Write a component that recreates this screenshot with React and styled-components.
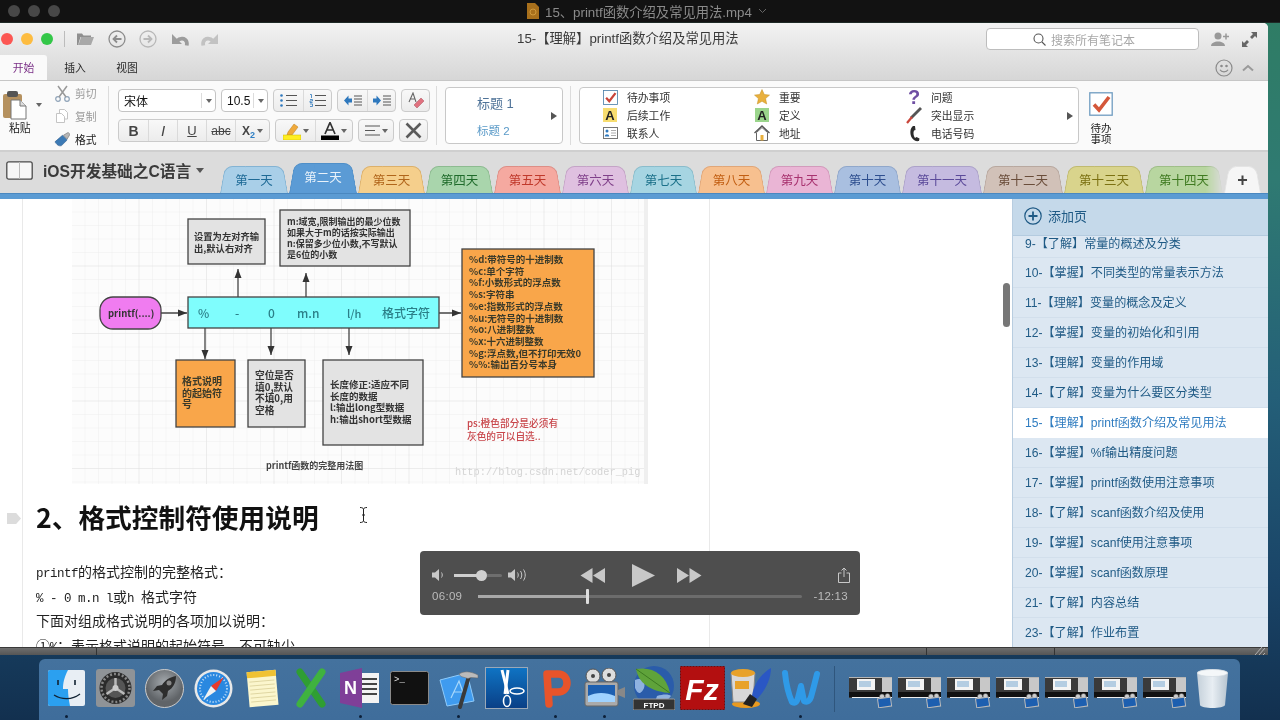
import React from 'react';
import styled, { createGlobalStyle, css } from 'styled-components';

const Global = createGlobalStyle`
  html, body { margin: 0; padding: 0; background: #17304a; }
  * { box-sizing: border-box; }
  body { font-family: "Liberation Sans", "Noto Sans CJK SC", sans-serif; }
`;

const Stage = styled.div`
  position: relative; width: 1280px; height: 720px; overflow: hidden;
  display: flex; flex-direction: column;
  background: linear-gradient(180deg, #2f7d63 0%, #2f7a72 25%, #245f78 55%, #1a4568 80%, #12304f 100%);
  filter: blur(0.4px);
`;

/* ---------- movie player title bar ---------- */
const TopBar = styled.div`
  height: 23px; flex: none; background: #121212; display: flex; align-items: center;
  border-bottom: 1px solid #1e2a26; padding-left: 8px;
`;
const Dim = styled.span`width: 12px; height: 12px; border-radius: 50%; background: #474747; margin-right: 8px;`;
const MovieTitle = styled.div`
  margin-left: 459px; display: flex; align-items: center; gap: 6px;
  color: #8b8b8b; font-size: 13.3px; white-space: nowrap;
`;

/* ---------- window ---------- */
const Window = styled.div`
  width: 1268px; height: 632px; flex: none; display: flex; flex-direction: column;
  border-top-right-radius: 5px; overflow: hidden; background: #fff;
`;
const Chrome = styled.div`
  height: 57px; flex: none; display: flex; flex-direction: column;
  background: linear-gradient(180deg, #f3f3f3 0%, #e4e4e4 50%, #d6d6d6 100%);
`;
const ChromeTop = styled.div`height: 32px; display: flex; align-items: center; position: relative;`;
const Light = styled.span`
  width: 12px; height: 12px; border-radius: 50%; background: ${p => p.$c}; margin-left: ${p => p.$ml}px; flex: none;
`;
const ToolSep = styled.span`width: 1px; height: 16px; background: #bcbcbc; margin-left: 11px; flex: none;`;
const ToolIcon = styled.span`display: flex; flex: none; margin-left: ${p => p.$ml}px;`;
const NoteTitle = styled.div`
  position: absolute; left: 517px; top: 8px; font-size: 13.3px; line-height: 16px; color: #3a3a3a; white-space: nowrap;
`;
const Search = styled.div`
  margin-left: 767px; width: 213px; height: 22px; flex: none; border: 1px solid #bdbdbd; border-radius: 4px; background: #fff;
  display: flex; align-items: center; padding-left: 46px; gap: 5px; color: #a8a8a8; font-size: 12px;
`;
const ChromeTabs = styled.div`height: 25px; display: flex; align-items: flex-end; position: relative;`;
const RibbonTab = styled.div`
  height: 25px; width: ${p => p.$w}px; flex: none; font-size: 10.8px; display: flex; align-items: center; justify-content: center;
  padding-bottom: 2px;
  color: ${p => (p.$active ? '#7a2f86' : '#2a2a2a')};
  background: ${p => (p.$active ? '#fafafa' : 'transparent')};
  border-top-right-radius: ${p => (p.$active ? '3px' : '0')};
`;
const TabsRight = styled.div`margin-left: auto; margin-right: 14px; display: flex; align-items: center; gap: 9px; align-self: center;`;

/* ---------- ribbon ---------- */
const Ribbon = styled.div`
  height: 72px; flex: none; display: flex; background: #fafafa;
  border-top: 1px solid #c6c6c6; border-bottom: 2px solid #cfcfcf;
`;
const Group = styled.div`
  width: ${p => p.$w}px; flex: none; display: flex; margin: 5px 0 5px;
  border-right: ${p => (p.$noline ? 'none' : '1px solid #dcdcdc')};
`;
const PasteCol = styled.div`width: 54px; flex: none; position: relative; display: flex; flex-direction: column; padding: 4px 0 0 3px;`;
const PasteLabel = styled.div`font-size: 10.8px; color: #222; margin: 1px 0 0 6px; line-height: 14px;`;
const Caret = styled.span`
  width: 0; height: 0; border-left: ${p => p.$s || 3}px solid transparent; border-right: ${p => p.$s || 3}px solid transparent;
  border-top: ${p => (p.$s || 3) + 1}px solid ${p => p.$c || '#666'}; flex: none; display: block;
`;
const PasteCaret = styled(Caret)`position: absolute; left: 36px; top: 17px;`;
const CutCol = styled.div`display: flex; flex-direction: column; margin-top: -3px; gap: 3px; flex: none;`;
const CutRow = styled.div`
  height: 20px; flex: none; display: flex; align-items: center; gap: 5px; font-size: 10.8px;
  color: ${p => (p.$on ? '#222' : '#9b9b9b')};
`;
const CutIcon = styled.span`width: 16px; display: flex; justify-content: center; flex: none;`;
const FontGroup = styled.div`padding: 3px 0 0 9px; display: flex; flex-direction: column; gap: 7px;`;
const FRow = styled.div`display: flex; gap: 5px; height: 23px;`;
const Combo = styled.div`
  width: ${p => p.$w}px; height: 23px; background: #fff; border: 1px solid #c4c4c4; border-radius: 4px;
  display: flex; align-items: center; font-size: ${p => p.$fs}px; color: #111; padding-left: 5px; position: relative;
`;
const ComboArrow = styled.span`
  position: absolute; right: 0; top: 3px; bottom: 3px; width: ${p => p.$w || 14}px; border-left: 1px solid #dcdcdc;
  display: flex; align-items: center; justify-content: center;
`;
const BtnGroup = styled.div`
  display: flex; height: 23px; border: 1px solid #cbcbcb; border-radius: 4px; background: linear-gradient(#f8f8f8, #ececec); overflow: hidden;
`;
const Btn = styled.div`
  width: ${p => p.$w}px; display: flex; align-items: center; justify-content: center; gap: 2px; flex: none; color: #444;
  & + & { border-left: 1px solid #dadada; }
`;
const Fmt = styled.span`
  font-family: "Liberation Sans", sans-serif; font-size: ${p => p.$fs || 14}px; color: #444; line-height: 1;
  font-weight: ${p => (p.$b ? 700 : 400)}; font-style: ${p => (p.$i ? 'italic' : 'normal')};
  text-decoration: ${p => p.$d || 'none'};
`;
const Sub = styled.sub`font-size: 9px; color: #2f7fc4; font-weight: 700; vertical-align: -3px; line-height: 0;`;
const StyleBox = styled.div`
  width: 118px; margin: 1px 0 0 8px; height: 57px; background: #fff; border: 1px solid #c8c8c8; border-radius: 4px;
  position: relative; padding: 7px 0 0 31px; display: flex; flex-direction: column; gap: 10px; flex: none;
`;
const H1 = styled.div`font-size: 13px; line-height: 18px; color: #4f7398;`;
const H2 = styled.div`font-size: 11.5px; line-height: 16px; color: #5a9ac8;`;
const MoreArrow = styled.span`
  position: absolute; right: ${p => p.$r}px; top: 24px; width: 0; height: 0;
  border-top: 4px solid transparent; border-bottom: 4px solid transparent; border-left: 6px solid #555;
`;
const TagBox = styled.div`
  width: 500px; flex: none; height: 57px; margin: 1px 0 0 8px; background: #fff; border: 1px solid #c8c8c8; border-radius: 4px;
  position: relative; padding: 0 0 0 17px; display: grid; grid-template-columns: repeat(3, 152px); grid-auto-rows: 18px;
`;
const TagItem = styled.div`display: flex; align-items: center; font-size: 10.8px; color: #333; white-space: nowrap;`;
const TagIcon = styled.span`width: 26px; flex: none; display: flex; justify-content: center; margin-right: 4px;`;
const TodoBtn = styled.div`
  width: 44px; flex: none; margin: 6px 0 0 0; display: flex; flex-direction: column; align-items: center;
`;
const TodoText = styled.div`font-size: 10.5px; line-height: 11px; color: #222; margin-top: 7px; text-align: center;`;

/* ---------- section tabs ---------- */
const SectionBar = styled.div`
  height: 41px; flex: none; background: #dcdcdc; display: flex; align-items: flex-end;
`;
const Notebook = styled.div`
  width: 220px; flex: none; height: 41px; display: flex; align-items: center; padding: 0 0 4px 6px; position: relative;
`;
const NotebookName = styled.div`
  font-size: 15.7px; font-weight: 700; color: #3a3a3a; margin: 0 5px 0 10px; white-space: nowrap;
`;
const Tabs = styled.div`display: flex; align-items: flex-end; height: 41px;`;
const Tab = styled.div`
  position: relative; width: ${p => p.$w}px; margin-right: ${p => p.$mr ?? 1}px; flex: none;
  height: ${p => (p.$active ? 30 : 27)}px; display: flex; align-items: center; justify-content: center;
  font-size: 12.5px; color: ${p => p.$fg}; isolation: isolate; white-space: nowrap;
  ${p => p.$active && css`padding-bottom: 4px;`}
  ${p => p.$fade && css`
    -webkit-mask-image: linear-gradient(90deg, #000 78%, transparent 100%);
    mask-image: linear-gradient(90deg, #000 78%, transparent 100%);
  `}
  &::before, &::after {
    content: ""; position: absolute; top: 0; bottom: 0; width: 55%; z-index: -1;
    background: ${p => p.$bg}; border-top: 1px solid ${p => p.$line};
  }
  &::before {
    left: 0; transform-origin: bottom left; transform: skewX(-10deg);
    border-left: 1px solid ${p => p.$line}; border-top-left-radius: 8px;
  }
  &::after {
    right: 0; transform-origin: bottom right; transform: skewX(10deg);
    border-right: 1px solid ${p => p.$line}; border-top-right-radius: 8px;
  }
`;
const PlusGlyph = styled.span`font-size: 18px; font-weight: 700; color: #444; line-height: 1; font-family: "Liberation Sans", sans-serif;`;
const BlueLine = styled.div`height: 6px; flex: none; background: #5b9bd3; border-top: 1px solid #4a88c0;`;

/* ---------- body ---------- */
const Body = styled.div`flex: 1; min-height: 0; display: flex; position: relative;`;
const Page = styled.div`
  width: 1012px; flex: none; overflow: hidden; position: relative; background: #fff;
  display: flex; flex-direction: column;
`;
const RuleLine = styled.span`position: absolute; top: 0; bottom: 0; left: ${p => p.$x}px; width: 1px; background: #e9e9e9;`;
const Diagram = styled.svg`display: block; margin-left: 72px; flex: none;`;
const DT = styled.text`
  font-family: "Noto Sans CJK SC", sans-serif; font-size: ${p => p.$s || 10}px; fill: ${p => p.$c || '#333'};
  font-weight: ${p => p.$w || 500};
`;
const Heading = styled.h2`
  margin: 15px 0 0 36px; font-size: 26.7px; line-height: 36px; font-weight: 700; color: #111;
  font-family: "Noto Sans CJK SC", sans-serif; position: relative; white-space: nowrap;
`;
const OutlineTag = styled.span`
  position: absolute; left: -29px; top: 14px; width: 14px; height: 11px; background: #dcdcdc;
  clip-path: polygon(0 0, 65% 0, 100% 50%, 65% 100%, 0 100%);
`;
const Para = styled.p`
  margin: ${p => p.$mt || 0}px 0 0 36px; font-size: 14px; line-height: 24.5px; height: 24.5px; flex: none; color: #222; white-space: nowrap;
  font-family: "Noto Sans CJK SC", sans-serif;
`;
const Latin = styled.span`font-family: "Liberation Mono", monospace; font-size: 12.5px; letter-spacing: -0.5px;`;
const Thumb = styled.div`
  position: absolute; left: 1003px; top: 84px; width: 7px; height: 44px; border-radius: 4px; background: #777;
`;
const IBeam = styled.span`position: absolute; left: 359px; top: 308px; display: flex;`;

/* ---------- sidebar ---------- */
const Side = styled.div`width: 256px; flex: none; background: #dce7f2; display: flex; flex-direction: column; overflow: hidden; border-left: 1px solid #b8cde0;`;
const AddPage = styled.div`
  height: 37px; flex: none; background: #c5d9ea; display: flex; align-items: center; padding: 0 0 3px 11px; gap: 6px;
  font-size: 13px; color: #1f5a85; border-bottom: 1px solid #b4cbdf;
`;
const PageRow = styled.div`
  height: ${p => p.$h || 30}px; flex: none; display: flex; align-items: ${p => (p.$h ? 'flex-start' : 'center')};
  padding-left: 12px; font-size: 12.1px; line-height: 16px; white-space: nowrap;
  color: ${p => (p.$active ? '#2f7cc0' : '#1f5a85')};
  background: ${p => (p.$active ? '#fff' : '#dce7f2')};
  border-bottom: 1px solid ${p => (p.$active ? '#fff' : '#d2dfec')};
`;

/* ---------- status ---------- */
const Status = styled.div`
  height: 8px; flex: none; display: flex; background: linear-gradient(180deg, #6e6e6e, #555); border-top: 1px solid #3a3a3a; position: relative;
`;
const Seg = styled.span`width: ${p => p.$w}px; flex: none; border-right: 1px solid #333; `;
const Grip = styled.span`position: absolute; right: 3px; bottom: 0; color: #bbb; display: flex;`;

/* ---------- player HUD ---------- */
const Hud = styled.div`
  position: absolute; left: 420px; top: 551px; width: 440px; height: 64px; background: #4e4e4e; border-radius: 4px;
  color: #c8c8c8; padding: 9px 12px 0;
`;
const HudTop = styled.div`height: 30px; display: flex; align-items: center;`;
const HudBtn = styled.span`display: flex; flex: none; margin-left: ${p => p.$ml || 0}px;`;
const Vol = styled.span`
  width: 48px; height: 3px; background: #6e6e6e; border-radius: 2px; margin-left: 8px; position: relative; flex: none;
  &::before { content: ""; position: absolute; left: 0; top: 0; height: 3px; width: 27px; background: #cfcfcf; }
  &::after { content: ""; position: absolute; left: 22px; top: -4px; width: 11px; height: 11px; border-radius: 50%; background: #d0d0d0; }
`;
const HudBottom = styled.div`display: flex; align-items: center; height: 16px; margin-top: -2px; font-size: 11.5px; letter-spacing: .3px; color: #bcbcbc;`;
const Time = styled.span`width: ${p => p.$w}px; flex: none; text-align: ${p => p.$r ? 'right' : 'left'};`;
const Track = styled.span`width: 324px; flex: none; margin: 0 9px 0 12px; height: 3px; background: #6c6c6c; position: relative; border-radius: 2px;`;
const TrackFill = styled.span`position: absolute; left: 0; top: 0; height: 3px; background: #a8a8a8;`;
const TrackHead = styled.span`position: absolute; top: -6px; width: 3px; height: 15px; background: #dedede; border-radius: 1px;`;

/* ---------- dock ---------- */
const Dock = styled.div`
  margin: 4px 0 0 39px; width: 1201px; height: 61px; flex: none; background: linear-gradient(180deg, #44729e, #3f6d9b);
  border-radius: 6px 6px 0 0; display: flex; padding: 7px 0 0 3.5px;
`;
const Slot = styled.div`
  width: ${p => p.$w || 48.9}px; flex: none; height: 44px; display: flex; align-items: center; justify-content: center; position: relative;
`;
const RunDot = styled.span`position: absolute; top: 49px; left: 50%; margin-left: -1.5px; width: 3px; height: 3px; border-radius: 50%; background: #0c1f38;`;
const DockSep = styled.span`width: 1px; height: 46px; margin: 0 12px 0 9px; background: #2f567d; flex: none;`;

/* ---------- icons ---------- */
const Folder = () => (
  <svg width="19" height="16" viewBox="0 0 19 16"><path d="M1 3.500V14h14l3-8H5L2.500 14" fill="#a8a8a8" /><path d="M1 14V2.500h5l1.500 2H15V6H4.500L2 14z" fill="#8f8f8f" /></svg>
);
const Nav = ({ c }) => (
  <svg width="18" height="18" viewBox="0 0 18 18" fill="none" stroke={c}><circle cx="9" cy="9" r="8" strokeWidth="1.300" /><path d="M13.500 9H6M9 5.500 5.500 9 9 12.500" strokeWidth="1.800" /></svg>
);
const FwdNav = ({ c }) => (
  <svg width="18" height="18" viewBox="0 0 18 18" fill="none" stroke={c}><circle cx="9" cy="9" r="8" strokeWidth="1.300" /><path d="M4.500 9H12M9 5.500 12.500 9 9 12.500" strokeWidth="1.800" /></svg>
);
const Undo = ({ c, flip }) => (
  <svg width="18" height="13" viewBox="0 0 18 13" transform={flip ? 'scale(-1 1)' : undefined}>
    <path d="M1 1v10h10z" fill={c} />
    <path d="M6 8c3-3.500 8-3 9.500 0.500.5 1.200.5 2.500.2 4" fill="none" stroke={c} strokeWidth="3.800" />
  </svg>
);
const Clipboard = () => (
  <svg width="26" height="30" viewBox="0 0 26 30">
    <rect x="0" y="4" width="19" height="24" rx="2" fill="#b5915f" />
    <rect x="4" y="1" width="11" height="6" rx="2" fill="#555" />
    <path d="M8 10h9l6 6v13H8z" fill="#fff" stroke="#777" />
    <path d="M17 10v6h6" fill="#ddd" stroke="#777" />
  </svg>
);
const ScissorsI = () => (
  <svg width="15" height="17" viewBox="0 0 15 17" fill="none" stroke="#8fa3b8" strokeWidth="1.200"><circle cx="3" cy="14" r="2.300" /><circle cx="12" cy="14" r="2.300" /><path d="M4 12 12 1M11 12 3 1" stroke="#999" strokeWidth="1.500" /></svg>
);
const CopyI = () => (
  <svg width="15" height="16" viewBox="0 0 15 16" fill="#fff" stroke="#c4c4c4"><path d="M4.500 1.500h5l3 3V11h-8z" /><path d="M1.500 5.500h5l3 3v6h-8z" /></svg>
);
const BrushI = () => (
  <svg width="17" height="15" viewBox="0 0 17 15"><path d="M10 3 15 0l2 2-3 5z" fill="#b7b7b7" stroke="#666" strokeWidth=".6" /><path d="M1 10 9 3l5 5-6 6c-3 1-5-1-7-4z" fill="#3c7ab5" stroke="#2a5a8a" strokeWidth=".6" /></svg>
);
const Bullet = () => (
  <svg width="17" height="13" viewBox="0 0 17 13"><g fill="#2e78bd"><circle cx="1.500" cy="1.500" r="1.300" /><circle cx="1.500" cy="6.500" r="1.300" /><circle cx="1.500" cy="11.500" r="1.300" /></g><path d="M6 1.500h11M6 6.500h11M6 11.500h11" stroke="#555" /></svg>
);
const Numbered = () => (
  <svg width="17" height="13" viewBox="0 0 17 13"><path d="M1 .5h1.500v3.500M1 5.500h2.500v1.500H1v1.500h2.500M1 10h2.500v2.500H1" fill="none" stroke="#2e78bd" strokeWidth=".8" /><path d="M6 1.500h11M6 6.500h11M6 11.500h11" stroke="#555" /></svg>
);
const Indent = ({ rev }) => (
  <svg width="18" height="11" viewBox="0 0 18 11">
    {rev ? <path d="M0 3.500h3.500V.5L8 5.500l-4.500 5v-3H0z" fill="#2e78bd" /> : <path d="M8 3.500H4.500V.5L0 5.500l4.500 5v-3H8z" fill="#2e78bd" />}
    <path d="M10 1h8M10 4h8M10 7h8M10 10h8" stroke="#555" />
  </svg>
);
const Eraser = () => (
  <svg width="17" height="17" viewBox="0 0 17 17"><path d="M2 10 6 1l3 9M3.500 7h4" fill="none" stroke="#666" strokeWidth="1.100" /><path d="M7 13l7-7 3 3-7 7z" fill="#e0717f" stroke="#a8505c" strokeWidth=".5" /></svg>
);
const Highlighter = () => (
  <svg width="18" height="18" viewBox="0 0 18 18"><path d="M5 10 11 2l4 3-6 8H4z" fill="#f0a93a" stroke="#b87c1c" strokeWidth=".5" /><rect x="0" y="13" width="18" height="5" fill="#ffee22" stroke="#c8b800" strokeWidth=".5" /></svg>
);
const ColorA = () => (
  <svg width="18" height="18" viewBox="0 0 18 18"><path d="M4 12 9 .5 14 12M6 8h6" fill="none" stroke="#333" strokeWidth="1.700" /><rect y="13.500" width="18" height="4.500" fill="#000" /></svg>
);
const AlignI = () => (
  <svg width="15" height="11" viewBox="0 0 15 11"><path d="M0 1h15M0 5.500h10M0 10h15" stroke="#555" /></svg>
);
const BigX = () => (
  <svg width="17" height="17" viewBox="0 0 17 17"><path d="M1.500 1.500l14 14M15.500 1.500l-14 14" stroke="#5a5a5a" strokeWidth="2.600" /></svg>
);
const Check = ({ s = 15, stroke = '#4a7fa8', tick = '#c9453a' }) => (
  <svg width={s} height={s} viewBox="0 0 24 24"><rect x=".8" y=".8" width="22.400" height="22.400" fill="#fff" stroke={stroke} strokeWidth="1.300" /><path d="M5 12.500 10 18 20 5" fill="none" stroke={tick} strokeWidth="3.600" /></svg>
);
const LetterA = ({ bg }) => (
  <svg width="14" height="14" viewBox="0 0 14 14"><rect width="14" height="14" fill={bg} /><text x="7" y="12" textAnchor="middle" fontSize="13" fontWeight="700" fontFamily="Liberation Sans" fill="#222">A</text></svg>
);
const Contact = () => (
  <svg width="15" height="12" viewBox="0 0 15 12"><rect x=".5" y=".5" width="14" height="11" fill="#fff" stroke="#777" /><circle cx="4" cy="4" r="1.500" fill="#2e78bd" /><path d="M1.800 9.500c0-3 4.400-3 4.400 0z" fill="#2e78bd" /><path d="M8 3.500h5M8 6h5M8 8.500h5" stroke="#999" strokeWidth=".8" /></svg>
);
const StarI = () => (
  <svg width="16" height="16" viewBox="0 0 16 16"><path d="M8 .5l2.300 5 5.200.6-3.900 3.500 1.100 5.400L8 12.300 3.300 15l1.100-5.400L.5 6.100l5.200-.6z" fill="#e9b03d" stroke="#c48f22" strokeWidth=".5" /></svg>
);
const HomeI = () => (
  <svg width="16" height="16" viewBox="0 0 16 16"><path d="M.5 8 8 1l7.500 7" fill="none" stroke="#555" strokeWidth="1.300" /><path d="M2.500 7.500V15.500h11V7.500L8 2.500z" fill="#fff" stroke="#666" /><rect x="6.500" y="10" width="3" height="5.500" fill="#e9b03d" /></svg>
);
const QMark = () => (
  <svg width="14" height="18" viewBox="0 0 14 18"><text x="7" y="16" textAnchor="middle" fontSize="20" fontWeight="700" fontFamily="Liberation Sans" fill="#6f4fa3">?</text></svg>
);
const Marker = () => (
  <svg width="16" height="17" viewBox="0 0 16 17"><path d="M15 1 5 11" stroke="#555" strokeWidth="2.800" /><path d="M6 10 1 16" stroke="#c9453a" strokeWidth="2.200" /></svg>
);
const Phone = () => (
  <svg width="13" height="17" viewBox="0 0 13 17"><path d="M5 1C2 3 1.500 9 4 13c1.500 2.500 4 3.500 7 3l.5-2.500L8.500 12 7 13C5.500 11 5 7.500 6 5.500l1.500-.5L7 1z" fill="#2c2c2c" /></svg>
);
const Smile = () => (
  <svg width="18" height="18" viewBox="0 0 18 18" fill="none" stroke="#8b8b8b" strokeWidth="1.200"><circle cx="9" cy="9" r="8" /><circle cx="6.500" cy="7" r=".7" fill="#8b8b8b" /><circle cx="11.500" cy="7" r=".7" fill="#8b8b8b" /><path d="M5 10.800c1.500 2.800 6.500 2.800 8 0" /></svg>
);
const Chev = () => (
  <svg width="12" height="8" viewBox="0 0 12 8" fill="none"><path d="M1 6.500 6 2l5 4.500" stroke="#9a9a9a" strokeWidth="2" /></svg>
);
const UserAdd = () => (
  <svg width="19" height="15" viewBox="0 0 19 15" fill="#999"><circle cx="7" cy="4" r="3.500" /><path d="M0 14c0-6 14-6 14 0z" /><path d="M15 1.500v6M12 4.500h6" stroke="#999" strokeWidth="1.500" /></svg>
);
const Expand = () => (
  <svg width="15" height="15" viewBox="0 0 15 15" fill="#666"><path d="M9 0h6v6l-2-2-3 3-2-2 3-3zM6 15H0V9l2 2 3-3 2 2-3 3z" /></svg>
);
const Mag = () => (
  <svg width="13" height="13" viewBox="0 0 13 13" fill="none" stroke="#555" strokeWidth="1.100"><circle cx="5.500" cy="5.500" r="4.500" /><path d="M9 9l3.500 3.500" /></svg>
);
const BookI = () => (
  <svg width="27" height="19" viewBox="0 0 27 19"><rect x=".8" y=".8" width="25.400" height="17.400" rx="2" fill="#f7f7f7" stroke="#4a4a4a" strokeWidth="1.300" /><path d="M13.500 1v17" stroke="#bbb" /></svg>
);
const AddCircle = () => (
  <svg width="18" height="18" viewBox="0 0 18 18" fill="none" stroke="#1f5a85"><circle cx="9" cy="9" r="8.200" strokeWidth="1.200" /><path d="M9 4.500v9M4.500 9h9" strokeWidth="1.800" /></svg>
);
const GripI = () => (
  <svg width="11" height="8" viewBox="0 0 11 8" stroke="#c8c8c8" strokeWidth=".8"><path d="M1 8l7-8M5 8l6-7M9 8l2-2" /></svg>
);
const CursorI = () => (
  <svg width="9" height="16" viewBox="0 0 9 16" fill="none" stroke="#222"><path d="M1 .5c2 0 3 .5 3.500 1.500C5 1 6 .5 8 .5M4.500 2v12M1 15.500c2 0 3-.5 3.500-1.500.5 1 1.500 1.500 3.500 1.500M3 8h3" /></svg>
);

/* HUD icons */
const VolLow = () => (
  <svg width="14" height="12" viewBox="0 0 14 12" fill="#c8c8c8"><path d="M0 3.500h3L7 0v12L3 8.500H0z" /><path d="M9.500 3.500c1 1.500 1 3.500 0 5" fill="none" stroke="#c8c8c8" /></svg>
);
const VolHi = () => (
  <svg width="21" height="14" viewBox="0 0 21 14" fill="#c8c8c8"><path d="M0 4.500h3L7 1v12L3 9.500H0z" /><path d="M9.500 4.500c1 1.500 1 3.500 0 5M12.500 3c1.700 2.400 1.700 5.600 0 8M15.500 1.500c2.300 3.400 2.300 7.600 0 11" fill="none" stroke="#c8c8c8" /></svg>
);
const Rew = ({ flip }) => (
  <svg width="25" height="15" viewBox="0 0 25 15" fill="#c8c8c8">
    {flip ? <path d="M0 0l12 7.500L0 15zM12.500 0l12 7.500-12 7.500z" /> : <path d="M25 0 13 7.500 25 15zM12.500 0 .5 7.500l12 7.500z" />}
  </svg>
);
const Play = () => (
  <svg width="23" height="23" viewBox="0 0 23 23" fill="#c8c8c8"><path d="M0 0l23 11.500L0 23z" /></svg>
);
const Share = () => (
  <svg width="12" height="16" viewBox="0 0 12 16" fill="none" stroke="#c8c8c8"><path d="M3.500 6H.5v9.500h11V6h-3M6 10V1M3.500 3.500 6 1l2.500 2.500" /></svg>
);

/* Dock icons */
const FinderIcon = () => (
  <svg width="37" height="36" viewBox="0 0 37 36">
    <rect width="37" height="36" rx="2" fill="#e8eef4" />
    <path d="M2 0h18c-4 8-5 13-5 19h5c0 6 1 12 2 17H2a2 2 0 0 1-2-2V2a2 2 0 0 1 2-2z" fill="#2ba0f0" />
    <path d="M10 10v5M27 10v5" stroke="#123" strokeWidth="1.600" />
    <path d="M6 25c8 5 18 5 26-1" fill="none" stroke="#123" strokeWidth="1.300" />
  </svg>
);
const PrefsIcon = () => (
  <svg width="39" height="38" viewBox="0 0 39 38">
    <rect width="39" height="38" rx="3" fill="#8f9397" />
    <circle cx="19.500" cy="19" r="16" fill="#2b2b2b" />
    <circle cx="19.500" cy="19" r="14" fill="none" stroke="#888" strokeWidth="2.500" strokeDasharray="2 2" />
    <circle cx="19.500" cy="19" r="10" fill="#555" />
    <path d="M19.500 19V9M19.500 19l9 6M19.500 19l-9 6" stroke="#bbb" strokeWidth="2.500" />
    <circle cx="19.500" cy="19" r="3" fill="#ccc" />
  </svg>
);
const RocketIcon = () => (
  <svg width="39" height="39" viewBox="0 0 39 39">
    <defs><radialGradient id="rk" cx=".5" cy=".35"><stop offset="0" stopColor="#a5aaae" /><stop offset="1" stopColor="#606468" /></radialGradient></defs>
    <circle cx="19.500" cy="19.500" r="19" fill="url(#rk)" stroke="#ccc" />
    <path d="M31 7c-6 1-11 4-14 9l-5 1-4 5 6-1 4 4-1 6 5-4 1-5c5-3 8-8 8-15z" fill="#2d2d2d" />
    <circle cx="24" cy="14" r="2.500" fill="#888" />
  </svg>
);
const SafariIcon = () => (
  <svg width="39" height="39" viewBox="0 0 39 39">
    <circle cx="19.500" cy="19.500" r="19" fill="#e8e8e8" />
    <circle cx="19.500" cy="19.500" r="16.500" fill="#2a88e0" />
    <circle cx="19.500" cy="19.500" r="13.500" fill="none" stroke="#cfe6fa" strokeWidth="2" strokeDasharray="1 2" />
    <path d="M30 8 17 17l5 5z" fill="#e8392c" /><path d="M9 31l13-9-5-5z" fill="#f2f2f2" />
  </svg>
);
const NotesIcon = () => (
  <svg width="36" height="41" viewBox="0 0 36 41">
    <g transform="rotate(-5 18 20)">
      <rect x="3" y="3" width="29" height="35" fill="#fbf6cd" />
      <rect x="3" y="3" width="29" height="6" fill="#f0c233" />
      <path d="M5 13h25M5 17h25M5 21h25M5 25h25M5 29h25M5 33h25" stroke="#d9d09a" strokeWidth=".8" />
    </g>
  </svg>
);
const ExcelIcon = () => (
  <svg width="34" height="40" viewBox="0 0 34 40">
    <path d="M6 4 28 36" stroke="#2f9e33" strokeWidth="7" strokeLinecap="round" />
    <path d="M28 4 6 36" stroke="#3fb23f" strokeWidth="7" strokeLinecap="round" />
  </svg>
);
const OneNoteIcon = () => (
  <svg width="40" height="40" viewBox="0 0 40 40">
    <rect x="17" y="5" width="22" height="30" fill="#f3f3f3" />
    <path d="M22 11h15M22 16h15M22 21h15M22 26h15" stroke="#444" strokeWidth="2" />
    <path d="M0 5 22 0v40L0 35z" fill="#7f3f98" />
    <text x="10.500" y="26" textAnchor="middle" fontSize="18" fontWeight="700" fontFamily="Liberation Sans" fill="#fff">N</text>
  </svg>
);
const TermIcon = () => (
  <svg width="39" height="34" viewBox="0 0 39 34">
    <rect x=".5" y=".5" width="38" height="33" rx="2" fill="#111" stroke="#8a8a8a" />
    <text x="4" y="11" fontSize="9" fontFamily="Liberation Mono" fill="#eee">&gt;_</text>
  </svg>
);
const XcodeIcon = () => (
  <svg width="44" height="41" viewBox="0 0 44 41">
    <path d="M4 12 31 5l7 28-27 5z" fill="#3f9bef" stroke="#8fcbfa" />
    <path d="M15 30l8-17 5 14M18 24h10" fill="none" stroke="#a8d8fb" strokeWidth="1.200" />
    <path d="M33 8 24 39" stroke="#3a3a3a" strokeWidth="4" strokeLinecap="round" />
    <path d="M23 6c5-3 11-3 19 1v3l-7-.5-3 1-7-2z" fill="#bbb" stroke="#666" strokeWidth=".5" />
  </svg>
);
const ScissorIcon = () => (
  <svg width="43" height="42" viewBox="0 0 43 42">
    <defs><linearGradient id="sc" x1="0" y1="0" x2="0" y2="1"><stop offset="0" stopColor="#0f74c4" /><stop offset="1" stopColor="#0a3f86" /></linearGradient></defs>
    <rect x=".5" y=".5" width="42" height="41" fill="url(#sc)" stroke="#9aa8b8" />
    <path d="M17 3l6 24" stroke="#fff" strokeWidth="3" />
    <path d="M23 3l-3 24" stroke="#fff" strokeWidth="3" />
    <ellipse cx="22" cy="34" rx="3.500" ry="5.500" fill="none" stroke="#fff" strokeWidth="1.600" />
    <ellipse cx="32" cy="24" rx="7" ry="3" fill="none" stroke="#fff" strokeWidth="1.600" />
  </svg>
);
const PptIcon = () => (
  <svg width="32" height="41" viewBox="0 0 32 41" fill="none">
    <path d="M9 36 7 6h11c12 0 12 18 0 18h-8" stroke="#e8542a" strokeWidth="7.500" strokeLinecap="round" strokeLinejoin="round" />
  </svg>
);
const VideoIcon = () => (
  <svg width="43" height="41" viewBox="0 0 43 41">
    <circle cx="10" cy="8" r="7" fill="#ddd" stroke="#555" /><circle cx="26" cy="7" r="7" fill="#ddd" stroke="#555" />
    <circle cx="10" cy="8" r="2" fill="#444" /><circle cx="26" cy="7" r="2" fill="#444" />
    <rect x="2" y="14" width="33" height="24" rx="2" fill="#aaa" stroke="#666" />
    <rect x="5" y="17" width="27" height="17" fill="#1d5fb0" />
    <path d="M5 28c8-4 18-4 27 0v6H5z" fill="#9fd2ff" />
    <path d="M35 22l7-3v11l-7-3z" fill="#888" />
  </svg>
);
const FtpdIcon = () => (
  <svg width="42" height="44" viewBox="0 0 42 44">
    <circle cx="21" cy="20" r="20" fill="#2a5caa" />
    <path d="M2 14c8-4 12 4 8 10s-6 2-8-2zM24 30c6-2 12-2 14 0-4 6-12 8-16 6z" fill="#8fb2e0" />
    <path d="M3 3c16-3 30 5 34 24C22 26 6 20 3 3z" fill="#5fa33a" />
    <path d="M3 3l34 24" stroke="#3d7a22" />
    <rect x="0" y="33" width="42" height="11" rx="1.500" fill="#333" stroke="#999" />
    <text x="21" y="41.500" textAnchor="middle" fontSize="8" fontWeight="700" fontFamily="Liberation Sans" fill="#fff">FTPD</text>
  </svg>
);
const FzIcon = () => (
  <svg width="45" height="44" viewBox="0 0 45 44">
    <rect x=".5" y=".5" width="44" height="43" fill="#b30f10" stroke="#7a0808" strokeDasharray="2 1" />
    <text x="22" y="34" textAnchor="middle" fontSize="30" fontWeight="700" fontStyle="italic" fontFamily="Liberation Sans" fill="#fff">Fz</text>
  </svg>
);
const PaintIcon = () => (
  <svg width="44" height="42" viewBox="0 0 44 42">
    <ellipse cx="17" cy="37" rx="14" ry="4" fill="#e89a20" />
    <path d="M2 6h24l-2 29H4z" fill="#d8d8d8" stroke="#888" />
    <ellipse cx="14" cy="6" rx="12" ry="4" fill="#e8a22a" />
    <path d="M6 14h14v8H6z" fill="#e8a22a" />
    <path d="M42 1C30 8 24 20 23 29l5 3C36 24 42 12 42 1z" fill="#2a57c4" />
    <path d="M21 27l7 5-5 8-9-3z" fill="#222" />
  </svg>
);
const WordIcon = () => (
  <svg width="41" height="38" viewBox="0 0 41 38" fill="none">
    <path d="M5 4c1 10 3 20 7 29 4 2 5-1 6-4l3-12 3 15c4 2 6-1 7-4 2-7 4-15 6-23" stroke="#2f9ae8" strokeWidth="6" strokeLinecap="round" strokeLinejoin="round" />
  </svg>
);
const ThumbIcon = () => (
  <svg width="44" height="40" viewBox="0 -9 44 40">
    <rect y="0" width="43" height="21" fill="#3a3a3a" />
    <rect y="0" width="43" height="1" fill="#b5b5b5" />
    <rect x="33" y="1" width="10" height="14" fill="#c8c8c8" />
    <rect x="8" y="2" width="18" height="11" fill="#f4f4f4" />
    <rect x="10" y="4" width="12" height="6" fill="#b4cde2" />
    <rect x="0" y="15" width="43" height="5" fill="#111" />
    <rect x="3" y="20" width="40" height="1" fill="#eee" />
    <circle cx="33" cy="19.500" r="2.500" fill="#ccc" stroke="#444" strokeWidth=".5" /><circle cx="38.500" cy="19" r="2.500" fill="#ccc" stroke="#444" strokeWidth=".5" />
    <rect x="29" y="21" width="13" height="9" fill="#1d5fb0" stroke="#bbb" transform="rotate(-8 35 25)" />
  </svg>
);
const TrashIcon = () => (
  <svg width="33" height="41" viewBox="0 0 33 41">
    <defs><linearGradient id="tr" x1="0" x2="1"><stop offset="0" stopColor="#c4d0da" /><stop offset=".5" stopColor="#e8eef3" /><stop offset="1" stopColor="#b6c4d0" /></linearGradient></defs>
    <path d="M1 5c0-5 31-5 31 0l-3 32c-1 4-24 4-25 0z" fill="url(#tr)" />
    <ellipse cx="16.500" cy="5" rx="15" ry="3.500" fill="#f4f7f9" stroke="#c8d2da" strokeWidth=".5" />
  </svg>
);

/* Diagram */
const W = 576, HGT = 285;
const Lines = ({ x, y, lh, s, c, w, children }) => (
  <DT x={x} y={y} $s={s} $c={c} $w={w}>
    {children.map((t, i) => <tspan key={i} x={x} y={y + i * lh}>{t}</tspan>)}
  </DT>
);
const OX = 72, OY = 198;
const Box = ({ x1, y1, x2, y2, fill }) => (
  <rect x={x1 - OX} y={y1 - OY} width={x2 - x1} height={y2 - y1} fill={fill} stroke="#444" strokeWidth="1.300" />
);
const Arrow = ({ x1, y1, x2, y2 }) => {
  const dx = Math.sign(x2 - x1), dy = Math.sign(y2 - y1);
  const X2 = x2 - OX, Y2 = y2 - OY, X1 = x1 - OX, Y1 = y1 - OY;
  const pts = dx ? `${X2},${Y2} ${X2 - 9 * dx},${Y2 - 3.5} ${X2 - 9 * dx},${Y2 + 3.5}` : `${X2},${Y2} ${X2 - 3.5},${Y2 - 9 * dy} ${X2 + 3.5},${Y2 - 9 * dy}`;
  return <g><line x1={X1} y1={Y1} x2={X2} y2={Y2} stroke="#444" strokeWidth="1.300" /><polygon points={pts} fill="#333" /></g>;
};
const P = (x) => x - OX, Q = (y) => y - OY;
const DiagramArt = () => (
  <Diagram width={W} height={HGT} viewBox={`0 0 ${W} ${HGT}`}>
    <defs>
      <pattern id="minor" width="13.500" height="13.500" patternUnits="userSpaceOnUse"><path d="M13.500 0V13.500H0" fill="none" stroke="#e9e9e9" strokeWidth=".7" /></pattern>
      <pattern id="major" width="67.500" height="67.500" patternUnits="userSpaceOnUse"><path d="M67.500 0V67.500H0" fill="none" stroke="#dedede" strokeWidth=".8" /></pattern>
    </defs>
    <rect width={W} height={HGT} fill="#fcfcfc" />
    <rect width={W} height={HGT} fill="url(#minor)" />
    <rect width={W} height={HGT} fill="url(#major)" />
    <rect x={W - 4} width="4" height={HGT} fill="#efefef" />

    <Arrow x1={238} y1={296} x2={238} y2={268} />
    <Arrow x1={306} y1={296} x2={306} y2={272} />
    <Arrow x1={161} y1={312} x2={187} y2={312} />
    <Arrow x1={439} y1={312} x2={461} y2={312} />
    <Arrow x1={205} y1={327} x2={205} y2={358} />
    <Arrow x1={271} y1={327} x2={271} y2={354} />
    <Arrow x1={349} y1={327} x2={349} y2={354} />

    <Box x1={188} y1={218} x2={265} y2={263} fill="#e3e3e3" />
    <Lines x={P(194)} y={Q(239)} lh={11.500} s={9.300} w={700} c="#333">{['设置为左对齐输', '出,默认右对齐']}</Lines>
    <Box x1={280} y1={209} x2={410} y2={265} fill="#e3e3e3" />
    <Lines x={P(287)} y={Q(224)} lh={11} s={9} w={700} c="#333">{['m:域宽,限制输出的最少位数', '如果大于m的话按实际输出', 'n:保留多少位小数,不写默认', '是6位的小数']}</Lines>

    <rect x={P(100)} y={Q(296)} width="61" height="32" rx="13" fill="#f07cf0" stroke="#444" strokeWidth="1.300" />
    <DT x={P(108)} y={Q(316)} $s={9.500} $w={700} $c="#333">printf(....)</DT>

    <Box x1={188} y1={296} x2={439} y2={327} fill="#7ffdfd" />
    <DT x={P(198)} y={Q(317)} $s={12} $c="#2b7f88">%</DT>
    <DT x={P(235)} y={Q(317)} $s={12} $c="#2b7f88">-</DT>
    <DT x={P(268)} y={Q(317)} $s={12} $c="#2b7f88">0</DT>
    <DT x={P(297)} y={Q(317)} $s={12} $c="#2b7f88">m.n</DT>
    <DT x={P(347)} y={Q(317)} $s={11} $c="#2b7f88">l/h</DT>
    <DT x={P(382)} y={Q(317)} $s={12} $c="#2b7f88">格式字符</DT>

    <Box x1={176} y1={359} x2={235} y2={426} fill="#f9a64a" />
    <Lines x={P(182)} y={Q(384)} lh={11.700} s={10} w={700} c="#3a3a2a">{['格式说明', '的起始符', '号']}</Lines>
    <Box x1={248} y1={359} x2={305} y2={426} fill="#e3e3e3" />
    <Lines x={P(255)} y={Q(378)} lh={11.700} s={9.700} w={700} c="#333">{['空位是否', '填0,默认', '不填0,用', '空格']}</Lines>
    <Box x1={323} y1={359} x2={423} y2={444} fill="#e3e3e3" />
    <Lines x={P(330)} y={Q(387)} lh={11.500} s={9.500} w={700} c="#333">{['长度修正:适应不同', '长度的数据', 'l:输出long型数据', 'h:输出short型数据']}</Lines>

    <Box x1={462} y1={248} x2={594} y2={376} fill="#f9a64a" />
    <Lines x={P(469)} y={Q(262)} lh={11.700} s={9.500} w={700} c="#3a3a2a">{['%d:带符号的十进制数', '%c:单个字符', '%f:小数形式的浮点数', '%s:字符串', '%e:指数形式的浮点数', '%u:无符号的十进制数', '%o:八进制整数', '%x:十六进制整数', '%g:浮点数,但不打印无效0', '%%:输出百分号本身']}</Lines>

    <Lines x={P(467)} y={Q(426)} lh={13} s={9.700} c="#c8454a">{['ps:橙色部分是必须有', '灰色的可以自选..']}</Lines>
    <DT x={P(266)} y={Q(468)} $s={9} $w={700} $c="#444">printf函数的完整用法图</DT>
    <text x={P(455)} y={Q(474)} fontFamily="Liberation Mono" fontSize="10.300" fill="#d4d4d4">http://blog.csdn.net/coder_pig</text>
  </Diagram>
);

const tabs = [
  ['第一天', 68, '#a9cfe8', '#1e6a96', '#83b3d3'],
  ['第二天', 68, '#5b9bd5', '#e9f2fa', '#4f8fc8'],
  ['第三天', 67, '#f5cf8c', '#b0651a', '#dcb06a'],
  ['第四天', 67, '#a9d5ac', '#1f6b2b', '#8dbb90'],
  ['第五天', 67, '#f5a9a0', '#c0392b', '#dd8e86'],
  ['第六天', 67, '#dfc0e0', '#80408a', '#c4a4c6'],
  ['第七天', 67, '#a6d5e2', '#1a7089', '#8abccb'],
  ['第八天', 67, '#f7c08f', '#c25e12', '#e0a678'],
  ['第九天', 67, '#eab5d5', '#a8326f', '#d29abb'],
  ['第十天', 67, '#a9bfe0', '#2e4f8f', '#90a7ca'],
  ['第十一天', 80, '#c5bbe0', '#5b4a9a', '#aca2c8'],
  ['第十二天', 80, '#d1c1b8', '#6a4d3a', '#b8a89f'],
  ['第十三天', 80, '#d9d48c', '#7c7112', '#c0ba70'],
  ['第十四天', 78, '#b8d6a0', '#3f7a20', '#9fbe88'],
];
const pages = ['10-【掌握】不同类型的常量表示方法', '11-【理解】变量的概念及定义', '12-【掌握】变量的初始化和引用', '13-【理解】变量的作用域', '14-【了解】变量为什么要区分类型', '15-【理解】printf函数介绍及常见用法', '16-【掌握】%f输出精度问题', '17-【掌握】printf函数使用注意事项', '18-【了解】scanf函数介绍及使用', '19-【掌握】scanf使用注意事项', '20-【掌握】scanf函数原理', '21-【了解】内容总结', '23-【了解】作业布置'];
const dockApps = [
  [FinderIcon, 1], [PrefsIcon, 0], [RocketIcon, 0], [SafariIcon, 0], [NotesIcon, 0], [ExcelIcon, 0], [OneNoteIcon, 1], [TermIcon, 0],
  [XcodeIcon, 1], [ScissorIcon, 0], [PptIcon, 1], [VideoIcon, 1], [FtpdIcon, 0], [FzIcon, 0], [PaintIcon, 0], [WordIcon, 1],
];

export default function App() {
  return (
    <>
      <Global />
      <Stage>
        <TopBar>
          <Dim /><Dim /><Dim />
          <MovieTitle>
            <svg width="12" height="16" viewBox="0 0 12 16"><path d="M0 0h8l4 4v12H0z" fill="#a8701c" /><circle cx="6" cy="9" r="3" fill="none" stroke="#d09a3c" /></svg>
            <span>15、printf函数介绍及常见用法.mp4</span>
            <svg width="9" height="6" viewBox="0 0 9 6" fill="none" stroke="#666"><path d="M1 1l3.500 3.500L8 1" /></svg>
          </MovieTitle>
        </TopBar>
        <Window>
          <Chrome>
            <ChromeTop>
              <Light $c="#fc5753" $ml={1} />
              <Light $c="#fdbc40" $ml={8} />
              <Light $c="#33c748" $ml={8} />
              <ToolSep />
              <ToolIcon $ml={11}><Folder /></ToolIcon>
              <ToolIcon $ml={13}><Nav c="#8d8d8d" /></ToolIcon>
              <ToolIcon $ml={13}><FwdNav c="#b8b8b8" /></ToolIcon>
              <ToolIcon $ml={14}><Undo c="#9c9c9c" /></ToolIcon>
              <ToolIcon $ml={12}><Undo c="#c2c2c2" flip /></ToolIcon>
              <NoteTitle>15-【理解】printf函数介绍及常见用法</NoteTitle>
              <Search><Mag />搜索所有笔记本</Search>
              <ToolIcon $ml={12}><UserAdd /></ToolIcon>
              <ToolIcon $ml={12}><Expand /></ToolIcon>
            </ChromeTop>
            <ChromeTabs>
              <RibbonTab $active $w={47}>开始</RibbonTab>
              <RibbonTab $w={56}>插入</RibbonTab>
              <RibbonTab $w={48}>视图</RibbonTab>
              <TabsRight><Smile /><Chev /></TabsRight>
            </ChromeTabs>
          </Chrome>

          <Ribbon>
            <Group $w={109}>
              <PasteCol>
                <Clipboard />
                <PasteLabel>粘贴</PasteLabel>
                <PasteCaret />
              </PasteCol>
              <CutCol>
                <CutRow><CutIcon><ScissorsI /></CutIcon>剪切</CutRow>
                <CutRow><CutIcon><CopyI /></CutIcon>复制</CutRow>
                <CutRow $on><CutIcon><BrushI /></CutIcon>格式</CutRow>
              </CutCol>
            </Group>
            <Group $w={328}>
              <FontGroup>
                <FRow>
                  <Combo $w={98} $fs={12}>宋体<ComboArrow><Caret /></ComboArrow></Combo>
                  <Combo $w={47} $fs={12}>10.5<ComboArrow><Caret /></ComboArrow></Combo>
                  <BtnGroup><Btn $w={29}><Bullet /></Btn><Btn $w={28}><Numbered /></Btn></BtnGroup>
                  <BtnGroup><Btn $w={29}><Indent /></Btn><Btn $w={28}><Indent rev /></Btn></BtnGroup>
                  <BtnGroup><Btn $w={27}><Eraser /></Btn></BtnGroup>
                </FRow>
                <FRow>
                  <BtnGroup>
                    <Btn $w={29}><Fmt $b>B</Fmt></Btn>
                    <Btn $w={29}><Fmt $i $fs={15}>I</Fmt></Btn>
                    <Btn $w={29}><Fmt $d="underline" $fs={13}>U</Fmt></Btn>
                    <Btn $w={29}><Fmt $d="line-through" $fs={12}>abc</Fmt></Btn>
                    <Btn $w={34}><Fmt $b $fs={12}>X<Sub>2</Sub></Fmt><Caret /></Btn>
                  </BtnGroup>
                  <BtnGroup>
                    <Btn $w={39}><Highlighter /><Caret /></Btn>
                    <Btn $w={37}><ColorA /><Caret /></Btn>
                  </BtnGroup>
                  <BtnGroup><Btn $w={34}><AlignI /><Caret /></Btn></BtnGroup>
                  <BtnGroup><Btn $w={27}><BigX /></Btn></BtnGroup>
                </FRow>
              </FontGroup>
            </Group>
            <Group $w={134}>
              <StyleBox>
                <H1>标题 1</H1>
                <H2>标题 2</H2>
                <MoreArrow $r={5} />
              </StyleBox>
            </Group>
            <Group $w={560} $noline>
              <TagBox>
                <TagItem><TagIcon><Check /></TagIcon>待办事项</TagItem>
                <TagItem><TagIcon><StarI /></TagIcon>重要</TagItem>
                <TagItem><TagIcon><QMark /></TagIcon>问题</TagItem>
                <TagItem><TagIcon><LetterA bg="#f7dd70" /></TagIcon>后续工作</TagItem>
                <TagItem><TagIcon><LetterA bg="#9bd58c" /></TagIcon>定义</TagItem>
                <TagItem><TagIcon><Marker /></TagIcon>突出显示</TagItem>
                <TagItem><TagIcon><Contact /></TagIcon>联系人</TagItem>
                <TagItem><TagIcon><HomeI /></TagIcon>地址</TagItem>
                <TagItem><TagIcon><Phone /></TagIcon>电话号码</TagItem>
                <MoreArrow $r={5} />
              </TagBox>
              <TodoBtn>
                <Check s={24} stroke="#6f9cc0" tick="#d4573a" />
                <TodoText>待办<br />事项</TodoText>
              </TodoBtn>
            </Group>
          </Ribbon>

          <SectionBar>
            <Notebook>
              <BookI />
              <NotebookName>iOS开发基础之C语言</NotebookName>
              <Caret $s={4} $c="#555" />
            </Notebook>
            <Tabs>
              {tabs.map(([t, w, bg, fg, line], i) => (
                <Tab key={t} $w={w} $bg={bg} $fg={fg} $line={line} $active={i === 1} $fade={i === 13}>{t}</Tab>
              ))}
              <Tab $w={37} $bg="#f6f6f6" $fg="#444" $line="#e4e4e4" $mr={0}><PlusGlyph>+</PlusGlyph></Tab>
            </Tabs>
          </SectionBar>
          <BlueLine />

          <Body>
            <Page>
              <RuleLine $x={22} />
              <RuleLine $x={709} />
              <DiagramArt />
              <Heading><OutlineTag />2、格式控制符使用说明</Heading>
              <Para $mt={24}><Latin>printf</Latin>的格式控制的完整格式：</Para>
              <Para><Latin>% - 0 m.n l</Latin>或<Latin>h </Latin>格式字符</Para>
              <Para>下面对组成格式说明的各项加以说明：</Para>
              <Para>①<Latin>%</Latin>：表示格式说明的起始符号，不可缺少。</Para>
              <IBeam><CursorI /></IBeam>
              <Thumb />
            </Page>
            <Side>
              <AddPage><AddCircle />添加页</AddPage>
              <PageRow $h={22}>9-【了解】常量的概述及分类</PageRow>
              {pages.map((t) => <PageRow key={t} $active={t.startsWith('15-')}>{t}</PageRow>)}
            </Side>
          </Body>
          <Status>
            <Seg $w={97} />
            <Seg $w={830} />
            <Seg $w={128} />
            <Grip><GripI /></Grip>
          </Status>
        </Window>

        <Dock>
          {dockApps.map(([Icon, run], i) => (
            <Slot key={i}><Icon />{run ? <RunDot /> : null}</Slot>
          ))}
          <DockSep />
          {[0, 1, 2, 3, 4, 5, 6].map((i) => <Slot key={i} $w={49}><ThumbIcon /></Slot>)}
          <Slot $w={45}><TrashIcon /></Slot>
        </Dock>

        <Hud>
          <HudTop>
            <HudBtn><VolLow /></HudBtn>
            <Vol />
            <HudBtn $ml={6}><VolHi /></HudBtn>
            <HudBtn $ml={51}><Rew /></HudBtn>
            <HudBtn $ml={27}><Play /></HudBtn>
            <HudBtn $ml={22}><Rew flip /></HudBtn>
            <HudBtn $ml={136}><Share /></HudBtn>
          </HudTop>
          <HudBottom>
            <Time $w={34}>06:09</Time>
            <Track>
              <TrackFill style={{ width: `${(369 / 1102) * 100}%` }} />
              <TrackHead style={{ left: `${(369 / 1102) * 100}%` }} />
            </Track>
            <Time $w={37} $r>-12:13</Time>
          </HudBottom>
        </Hud>
      </Stage>
    </>
  );
}
